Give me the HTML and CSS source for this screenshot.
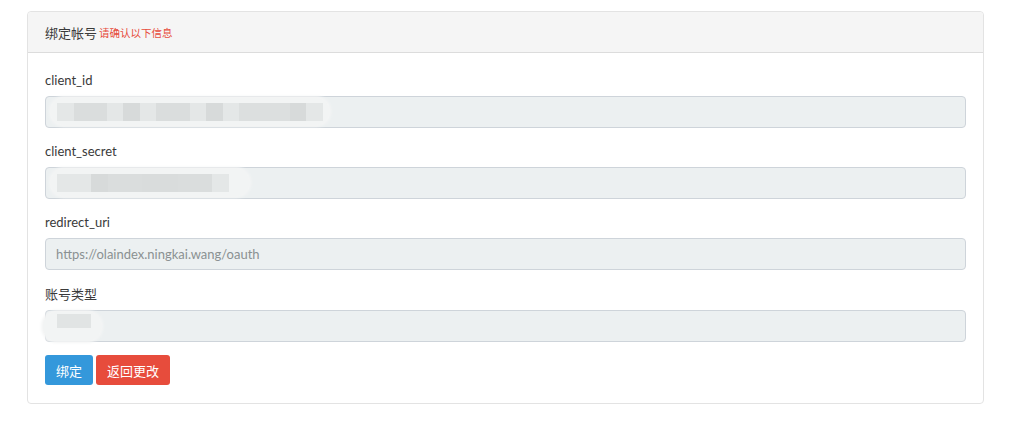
FILE: index.html
```html
<!DOCTYPE html>
<html lang="zh">
<head>
<meta charset="utf-8">
<title>绑定帐号</title>
<link rel="stylesheet" href="styles.css">
</head>
<body>
<div class="card">
  <div class="card-header">绑定帐号 <small class="hint">请确认以下信息</small></div>
  <div class="card-body">
    <div class="group">
      <label class="label">client_id</label>
      <div class="input">
        <div class="blur blur-id">
          <span class="b b1"></span><span class="b b2"></span><span class="b b1"></span><span class="b b3"></span><span class="b b1"></span><span class="b b2"></span><span class="b b1"></span><span class="b b3"></span><span class="b b1"></span><span class="b b2w"></span><span class="b b3"></span><span class="b b1"></span>
        </div>
      </div>
    </div>
    <div class="group">
      <label class="label">client_secret</label>
      <div class="input">
        <div class="blur blur-secret">
          <span class="b b1"></span><span class="b b1"></span><span class="b b3"></span><span class="b b2"></span><span class="b b3w"></span><span class="b b2"></span><span class="b b1"></span>
        </div>
      </div>
    </div>
    <div class="group group-wide">
      <label class="label">redirect_uri</label>
      <div class="input text">https://olaindex.ningkai.wang/oauth</div>
    </div>
    <div class="group">
      <label class="label">账号类型</label>
      <div class="input">
        <div class="blur blur-type"><span class="b b3w2"></span></div>
      </div>
    </div>
    <div class="actions">
      <button class="btn btn-primary">绑定</button>
      <button class="btn btn-danger">返回更改</button>
    </div>
  </div>
</div>
</body>
</html>
```
FILE: styles.css
```css
* { box-sizing: border-box; }
html, body { margin: 0; background: #fff; }
body {
  padding: 11px 40px 0 27px;
  font-family: Lato, "Noto Sans CJK SC", sans-serif;
  font-size: 13px;
  color: #3a3a3a;
}
.card {
  width: 957px;
  border: 1px solid #e3e3e3;
  border-radius: 4px;
  background: #fff;
}
.card-header {
  height: 41px;
  padding: 0 17px;
  display: flex;
  align-items: center;
  gap: 2px;
  background: #f5f5f5;
  border-bottom: 1px solid #dcdcdc;
  border-radius: 4px 4px 0 0;
  font-size: 13px;
  color: #3a3a3a;
}
.hint { font-size: 10.5px; color: #e74c3c; }
.card-body { padding: 17px 17px 18px 17px; }
.group { margin-bottom: 13px; }
.group-wide { margin-bottom: 14px; }
.label {
  display: block;
  height: 20px;
  line-height: 20px;
  margin-bottom: 6px;
  font-size: 13px;
  color: #3a3a3a;
}
.input {
  height: 32px;
  border: 1px solid #ced4da;
  border-radius: 4px;
  background: #ecf0f1;
  position: relative;
}
.input.text {
  padding: 0 10px;
  line-height: 30px;
  font-size: 13px;
  color: #8a9192;
}
.blur {
  position: absolute;
  display: flex;
  align-items: center;
  padding: 0 6px;
  background: #f2f4f4;
  border-radius: 13px;
  box-shadow: 0 0 3px 2px #f4f5f5;
}
.blur-id { left: 5px; top: 1px; width: 278px; height: 27px; }
.blur-secret { left: 5px; top: 1px; width: 198px; height: 27px; }
.blur-type { left: -3px; top: 1px; width: 58px; height: 29px; border-radius: 14px; align-items: flex-start; padding-top: 2px; }
.b { display: block; height: 18px; width: 17px; background: #e2e5e6; }
.b1 { background: #e4e7e7; }
.b2 { background: #dadddd; width: 34px; }
.b3 { background: #d7dada; }
.b2w { background: #dcdfdf; width: 52px; }
.b3w { background: #d9dcdc; width: 36px; }
.b3w2 { background: #e1e4e4; width: 34px; height: 14px; margin-left: 8px; }
.actions { display: flex; gap: 3px; margin-top: 1px; }
.btn {
  height: 30px;
  padding: 0 11px;
  border: 0;
  border-radius: 3px;
  font-family: Lato, "Noto Sans CJK SC", sans-serif;
  font-size: 13px;
  color: #fff;
  cursor: pointer;
}
.btn-primary { background: #3498db; }
.btn-danger { background: #e74c3c; }
```
